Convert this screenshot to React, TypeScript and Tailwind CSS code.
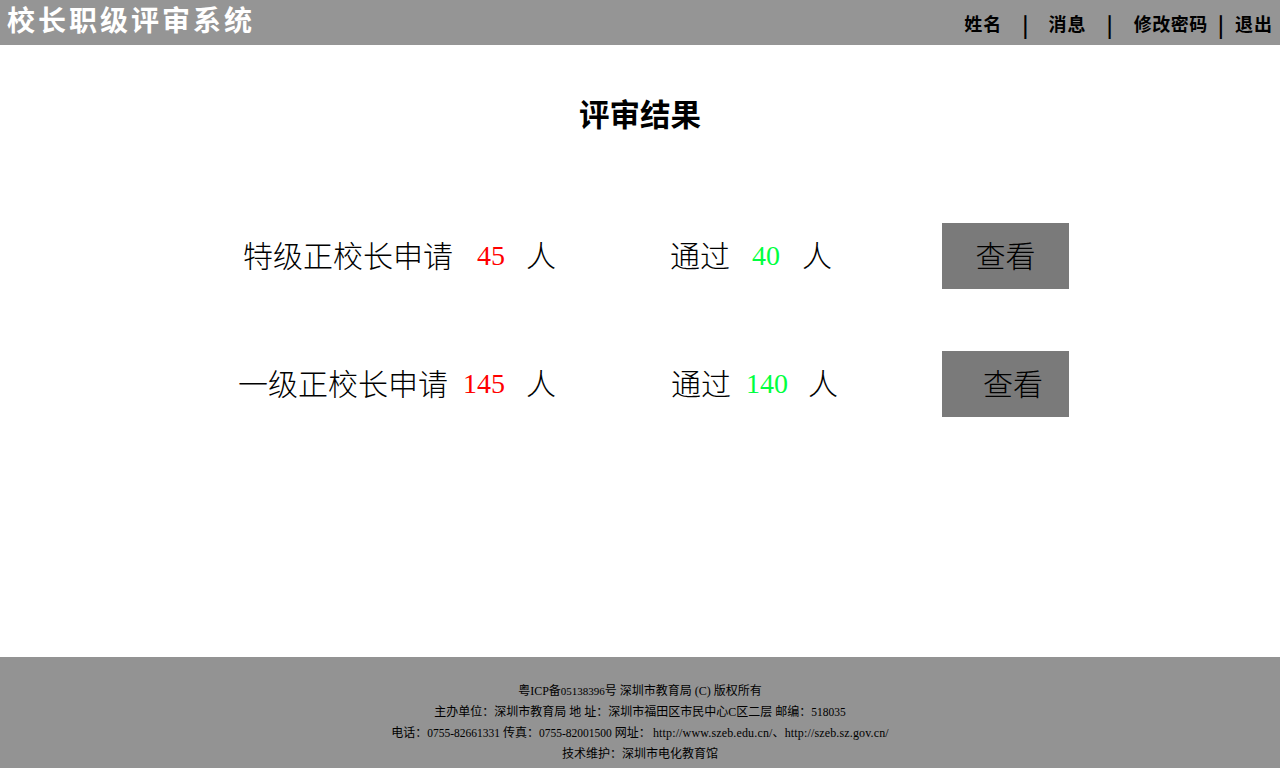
const sans = 'font-["Liberation_Sans","Noto_Sans_CJK_SC",sans-serif]';

const Row = ({ className, children }: { className: string; children: React.ReactNode }) => (
  <div className={`flex h-[66px] items-center whitespace-nowrap text-[30px] font-light text-black ${className}`}>
    {children}
  </div>
);

const Pipe = ({ className }: { className: string }) => (
  <span className={`-mt-[2px] font-['Noto_Sans_CJK_SC'] text-[21px] font-bold leading-[18px] tracking-normal ${className}`}>|</span>
);

export default function App() {
  return (
    <div className={`flex h-[768px] flex-col bg-white ${sans}`}>
      {/* header */}
      <header className="flex h-[45px] items-center justify-between bg-[#959595] px-[7px] pb-[1px]">
        <div className="text-[28px] font-bold tracking-[3px] text-white">校长职级评审系统</div>
        <nav className="mt-[6px] flex items-center text-[18px] font-bold tracking-[1px] text-black">
          <span>姓名</span>
          <Pipe className="ml-[20px] mr-[20px]" />
          <span>消息</span>
          <Pipe className="ml-[20px] mr-[21px]" />
          <span className="tracking-[0.5px]">修改密码</span>
          <Pipe className="ml-[10px] mr-[11px]" />
          <span>退出</span>
        </nav>
      </header>

      <main className="flex-1">
        <h1 className="mt-[50px] text-center text-[30.5px] font-bold leading-[40px] text-black">评审结果</h1>

        <Row className="mt-[88px]">
          <span className="ml-[243px]">特级正校长申请</span>
          <span className="ml-[24px] font-['Liberation_Serif'] text-[28px] text-[#ff0000]">45</span>
          <span className="ml-[21px]">人</span>
          <span className="ml-[114px]">通过</span>
          <span className="ml-[22px] font-['Liberation_Serif'] text-[28px] text-[#00ff40]">40</span>
          <span className="ml-[22px]">人</span>
          <a className="ml-[110px] flex h-[66px] w-[127px] items-center justify-center bg-[#7a7a7a]">查看</a>
        </Row>

        <Row className="mt-[62px]">
          <span className="ml-[238px]">一级正校长申请</span>
          <span className="ml-[15px] font-['Liberation_Serif'] text-[28px] text-[#ff0000]">145</span>
          <span className="ml-[21px]">人</span>
          <span className="ml-[115px]">通过</span>
          <span className="ml-[15px] font-['Liberation_Serif'] text-[28px] text-[#00ff40]">140</span>
          <span className="ml-[20px]">人</span>
          <a className="ml-[104px] flex h-[66px] w-[127px] items-center justify-center bg-[#7a7a7a] pl-[15px]">查看</a>
        </Row>
      </main>

      {/* footer */}
      <footer className="flex h-[111px] flex-col items-center bg-[#939393] pt-[24px] font-['Liberation_Serif','Noto_Sans_CJK_SC',serif] text-[12px] leading-[21px] text-black">
        <p>粤ICP备<span className="text-[11px]">05138396</span>号 深圳市教育局 (C) 版权所有</p>
        <p>主办单位：深圳市教育局 地 址：深圳市福田区市民中心C区二层 邮编：<span className="text-[11.5px]">518035</span></p>
        <p>
          电话：<span className="text-[11.5px]">0755-82661331</span> 传真：<span className="text-[11.5px]">0755-82001500</span> 网址：
          <span className="ml-[2px] tracking-[0.15px]">http://www.szeb.edu.cn/、http://szeb.sz.gov.cn/</span>
        </p>
        <p>技术维护：深圳市电化教育馆</p>
      </footer>
    </div>
  );
}
